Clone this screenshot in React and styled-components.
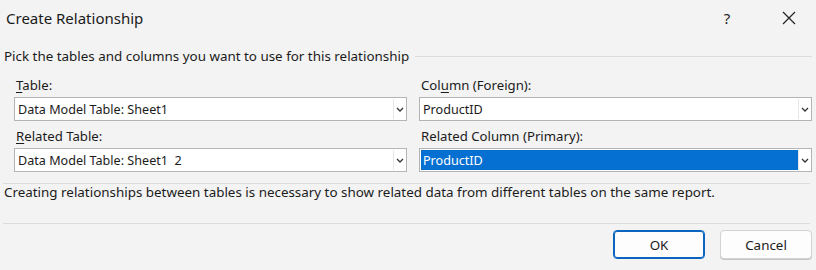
import React from 'react';
import styled, { createGlobalStyle } from 'styled-components';

const GlobalStyle = createGlobalStyle`
  html, body {
    margin: 0;
    padding: 0;
    background: #f3f3f3;
  }
  body {
    font-family: 'Segoe UI', 'Noto Sans', 'Open Sans', sans-serif;
    color: #1b1b1b;
  }
`;

const Dialog = styled.div`
  width: 816px;
  height: 270px;
  background: #f3f3f3;
  display: flex;
  flex-direction: column;
  overflow: hidden;
`;

const TitleBar = styled.div`
  height: 36px;
  display: flex;
  align-items: center;
  padding-left: 6px;
  font-size: 15px;
  color: #1a1a1a;
`;

const Title = styled.div`
  flex: 1;
`;

const TitleButton = styled.div`
  width: ${(p) => p.w}px;
  height: 36px;
  display: flex;
  align-items: center;
  justify-content: center;
  font-size: 15px;
  color: #222;
`;

const Header = styled.div`
  margin-top: 12px;
  padding: 0 4px;
  display: flex;
  align-items: center;
  gap: 6px;
  font-size: 13.4px;
  line-height: 16px;
  &::after {
    content: '';
    flex: 1;
    height: 1px;
    background: #dcdcdc;
    margin-top: 1px;
  }
`;

const Fields = styled.div`
  margin-top: 13px;
  padding: 0 4px 0 14px;
  display: grid;
  grid-template-columns: 1fr 1fr;
  column-gap: 12px;
`;

const Field = styled.div`
  display: flex;
  flex-direction: column;
  margin-bottom: ${(p) => (p.last ? 0 : 7)}px;
`;

const Label = styled.div`
  font-size: 13.2px;
  line-height: 16px;
  padding-left: 2px;
  margin-bottom: 4px;
  u {
    text-decoration-thickness: 1px;
    text-underline-offset: 2px;
  }
`;

const Combo = styled.div`
  height: 24px;
  box-sizing: border-box;
  border: 1px solid #b4b4b4;
  background: #fff;
  display: flex;
  align-items: stretch;
  padding: 1px;
`;

const ComboValue = styled.div`
  flex: 1;
  display: flex;
  align-items: center;
  padding-left: 2px;
  font-size: 12.6px;
  white-space: pre;
  background: ${(p) => (p.selected ? '#0670d2' : 'transparent')};
  color: ${(p) => (p.selected ? '#fff' : '#1b1b1b')};
`;

const Arrow = styled.div`
  width: 11px;
  display: flex;
  align-items: center;
  justify-content: center;
  border-left: 1px solid #e6e6e6;
`;

const Separator = styled.div`
  height: 1px;
  background: #dcdcdc;
  margin: ${(p) => p.m};
`;

const Description = styled.div`
  padding: 0 4px;
  font-size: 13.4px;
  line-height: 16px;
`;

const Footer = styled.div`
  margin-top: 6px;
  padding-right: 4px;
  display: flex;
  justify-content: flex-end;
  gap: 15px;
`;

const Button = styled.button`
  width: 92px;
  height: 29px;
  box-sizing: border-box;
  border-radius: 4px;
  background: #fdfdfd;
  border: 1px solid ${(p) => (p.primary ? '#0a64c0' : '#d3d3d3')};
  box-shadow: ${(p) => (p.primary ? 'inset 0 0 0 1px #0a64c0' : '0 1px 0 #c6c6c6')};
  font-family: inherit;
  font-size: 13.4px;
  color: #1b1b1b;
  padding: 0;
`;

const Chevron = () => (
  <svg width="8" height="5" viewBox="0 0 8 5">
    <path d="M1 1 L4 4 L7 1" fill="none" stroke="#333" strokeWidth="1.3" />
  </svg>
);

const CloseIcon = () => (
  <svg width="14" height="14" viewBox="0 0 14 14">
    <path d="M1 1 L13 13 M13 1 L1 13" stroke="#222" strokeWidth="1.2" />
  </svg>
);

const Select = ({ value, selected }) => (
  <Combo>
    <ComboValue selected={selected}>{value}</ComboValue>
    <Arrow>
      <Chevron />
    </Arrow>
  </Combo>
);

const App = () => {
  return (
    <Dialog>
      <GlobalStyle />
      <TitleBar>
        <Title>Create Relationship</Title>
        <TitleButton w={78}>?</TitleButton>
        <TitleButton w={46}>
          <CloseIcon />
        </TitleButton>
        <TitleButton w={4} />
      </TitleBar>
      <Header>Pick the tables and columns you want to use for this relationship</Header>
      <Fields>
        <Field>
          <Label>
            <u>T</u>able:
          </Label>
          <Select value="Data Model Table: Sheet1" />
        </Field>
        <Field>
          <Label>
            Col<u>u</u>mn (Foreign):
          </Label>
          <Select value="ProductID" />
        </Field>
        <Field last>
          <Label>
            <u>R</u>elated Table:
          </Label>
          <Select value="Data Model Table: Sheet1  2" />
        </Field>
        <Field last>
          <Label>Related Column (Primary):</Label>
          <Select value="ProductID" selected />
        </Field>
      </Fields>
      <Separator m="11px 6px 0 3px" />
      <Description>
        Creating relationships between tables is necessary to show related data from different
        tables on the same report.
      </Description>
      <Separator m="23px 6px 0 3px" />
      <Footer>
        <Button primary>OK</Button>
        <Button>Cancel</Button>
      </Footer>
    </Dialog>
  );
};

export default App;
